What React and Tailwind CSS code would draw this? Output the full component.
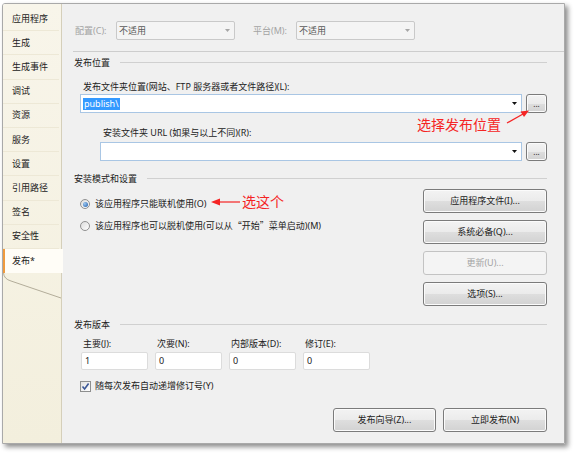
import React from 'react';

const tabs = ['应用程序', '生成', '生成事件', '调试', '资源', '服务', '设置', '引用路径', '签名', '安全性', '发布*'];

// Win7-style combo box
const Combo = ({ className = '', disabled, children }) => (
    <div
        className={`h-[19px] flex items-center pl-[2px] pr-[4px] border ${
            disabled ? 'bg-[#f4f4f4] border-[#c9c9c9] rounded-[2px] text-[#5a5a5a]' : 'bg-white border-[#a9c6e4]'
        } ${className}`}
    >
        <div className="flex-1 flex items-center">{children}</div>
        <svg width="5" height="3" viewBox="0 0 5 3">
            <path d="M0 0 L5 0 L2.5 3 Z" fill={disabled ? '#a6a6a6' : '#111'} />
        </svg>
    </div>
);

const Btn = ({ children, disabled, className = '' }) => (
    <div
        className={`flex items-center justify-center rounded-[3px] border ${
            disabled
                ? 'bg-[#f4f4f4] border-[#c3c3c3] text-[#a3a3a3]'
                : 'bg-[linear-gradient(to_bottom,#f3f3f3_0%,#ebebeb_50%,#dedede_51%,#d2d2d2_100%)] border-[#7b7b7b] shadow-[inset_0_0_0_1px_#fbfbfb]'
        } ${className}`}
    >
        {children}
    </div>
);

const SectionHeader = ({ title, className = '' }) => (
    <div className={`h-[12px] flex items-center ${className}`}>
        <span>{title}</span>
        <div className="flex-1 ml-[10px] h-[2px] border-t border-[#d0d0d0] border-b-white" />
    </div>
);

const Radio = ({ checked }) => (
    <span className="w-[10px] h-[10px] rounded-full border border-[#909090] bg-[linear-gradient(135deg,#dcdcdc,#ffffff)] flex items-center justify-center">
        {checked && <span className="w-[5px] h-[5px] rounded-full bg-[radial-gradient(circle_at_35%_35%,#9cc8f2,#1f5aa6)]" />}
    </span>
);

const Checkbox = () => (
    <span className="w-[11px] h-[11px] border border-[#8e8f8f] bg-[linear-gradient(135deg,#e2e2e2,#ffffff)] flex items-center justify-center">
        <svg width="9" height="9" viewBox="0 0 9 9">
            <path d="M1.5 4.5 L3.6 7 L7.6 1.5" fill="none" stroke="#3b5796" strokeWidth="1.6" />
        </svg>
    </span>
);

const VersionField = ({ label, value }) => (
    <div className="w-[67px] flex flex-col">
        <div className="h-[12px] pl-[2px]">{label}</div>
        <div className="mt-[2px] h-[18px] bg-white border border-[#dcdcdc] rounded-[2px] flex items-center pl-[3px]">{value}</div>
    </div>
);

export default function App() {
    return (
        <div className="relative w-[576px] h-[454px] bg-white overflow-hidden font-['Noto_Sans','Noto_Sans_CJK_SC',sans-serif] text-[9px] leading-[12px] text-[#222]">
            <div className="ml-[2px] mt-[3px] w-[563px] h-[441px] flex border border-[#a9a9a9] rounded-tl-[3px] shadow-[3px_3px_5px_rgba(0,0,0,0.45)] overflow-hidden">
                {/* Tab strip */}
                <div className="w-[59px] flex flex-col pt-[3px] border-r border-[#d5cfba] bg-[linear-gradient(to_bottom,#f8f5ea,#f3efdd)]">
                    {tabs.map((t, idx) =>
                        idx === tabs.length - 1 ? (
                            <div
                                key={idx}
                                className="relative z-10 w-[60px] h-[24.2px] flex items-center pl-[7px] bg-[#fffdf7] border-l-[2px] border-[#ef9a3d]"
                            >
                                {t}
                            </div>
                        ) : (
                            <div key={idx} className="h-[24.2px] flex items-center pl-[9px] border-b border-[#ede8d6] mr-[2px]">
                                {t}
                            </div>
                        )
                    )}
                    <svg width="59" height="26" viewBox="0 0 59 26">
                        <path d="M0.5 0 Q1 6 8 8 L58 25" fill="none" stroke="#b3ad9a" strokeWidth="1" />
                    </svg>
                </div>

                {/* Content */}
                <div className="flex-1 bg-[#f0f0f0] flex flex-col">
                    {/* Configuration row */}
                    <div className="pt-[17px] pl-[13px] flex items-center">
                        <span className="w-[41px] text-[#a3a3a3]">配置(C):</span>
                        <Combo disabled className="w-[119px]">不适用</Combo>
                        <span className="ml-[18px] w-[43px] text-[#a3a3a3]">平台(M):</span>
                        <Combo disabled className="w-[119px]">不适用</Combo>
                    </div>
                    <div className="mt-[11px] ml-[11px] h-[2px] border-t border-[#cdcdcd] border-b-white" />

                    <div className="pl-[12px] pr-[17px] flex flex-col">
                        {/* Publish location */}
                        <SectionHeader title="发布位置" className="mt-[4px]" />
                        <div className="mt-[12px] ml-[9px] h-[12px]">发布文件夹位置(网站、FTP 服务器或者文件路径)(L):</div>
                        <div className="mt-[1px] ml-[6px] flex">
                            <Combo className="flex-1">
                                <span className="bg-[#3399ff] text-white px-px leading-[12px]">publish\</span>
                            </Combo>
                            <Btn className="ml-[4px] w-[21px] h-[19px] text-[8px]">...</Btn>
                        </div>
                        <div className="mt-[14px] ml-[29px] h-[12px]">安装文件夹 URL (如果与以上不同)(R):</div>
                        <div className="mt-[3px] ml-[26px] flex">
                            <Combo className="flex-1" />
                            <Btn className="ml-[4px] w-[21px] h-[19px] text-[8px]">...</Btn>
                        </div>

                        {/* Install mode */}
                        <SectionHeader title="安装模式和设置" className="mt-[12px]" />
                        <div className="mt-[4px] flex">
                            <div className="flex-1 ml-[6px] flex flex-col">
                                <div className="mt-[9px] h-[12px] flex items-center gap-[5px]">
                                    <Radio checked />
                                    <span>该应用程序只能联机使用(O)</span>
                                </div>
                                <div className="mt-[10px] h-[12px] flex items-center gap-[5px]">
                                    <Radio />
                                    <span>
                                        该应用程序也可以脱机使用(可以从
                                        <span className="font-['Noto_Sans_CJK_SC',sans-serif]">“</span>开始
                                        <span className="font-['Noto_Sans_CJK_SC',sans-serif]">”</span>菜单启动)(M)
                                    </span>
                                </div>
                            </div>
                            <div className="w-[124px] flex flex-col gap-[7px]">
                                <Btn className="h-[24px]">应用程序文件(I)...</Btn>
                                <Btn className="h-[24px]">系统必备(Q)...</Btn>
                                <Btn disabled className="h-[24px]">更新(U)...</Btn>
                                <Btn className="h-[24px]">选项(S)...</Btn>
                            </div>
                        </div>

                        {/* Publish version */}
                        <SectionHeader title="发布版本" className="mt-[13px]" />
                        <div className="mt-[7px] ml-[7px] flex gap-[7px]">
                            <VersionField label="主要(J):" value="1" />
                            <VersionField label="次要(N):" value="0" />
                            <VersionField label="内部版本(D):" value="0" />
                            <VersionField label="修订(E):" value="0" />
                        </div>
                        <div className="mt-[10px] ml-[6px] h-[12px] flex items-center gap-[4px]">
                            <Checkbox />
                            <span>随每次发布自动递增修订号(Y)</span>
                        </div>

                        <div className="mt-[16px] flex justify-end gap-[7px]">
                            <Btn className="w-[103px] h-[24px]">发布向导(Z)...</Btn>
                            <Btn className="w-[104px] h-[24px]">立即发布(N)</Btn>
                        </div>
                    </div>
                </div>
            </div>

            {/* Red annotations */}
            <div className="absolute left-[417px] top-[115px] text-[14px] leading-[18px] text-[#f52424] font-['Noto_Sans_CJK_SC',sans-serif]">
                选择发布位置
            </div>
            <svg className="absolute left-[502px] top-[106px]" width="30" height="20" viewBox="0 0 30 20">
                <path d="M5 17 L21 8" stroke="#f52424" strokeWidth="1.2" />
                <path d="M27 4.5 L18.5 5.5 L22 11 Z" fill="#f52424" />
            </svg>
            <div className="absolute left-[242px] top-[192px] text-[14px] leading-[18px] text-[#f52424] font-['Noto_Sans_CJK_SC',sans-serif]">
                选这个
            </div>
            <svg className="absolute left-[210px] top-[197px]" width="32" height="10" viewBox="0 0 32 10">
                <path d="M8 5 L30 5" stroke="#f52424" strokeWidth="1.2" />
                <path d="M1 5 L10 1.5 L10 8.5 Z" fill="#f52424" />
            </svg>
        </div>
    );
}
